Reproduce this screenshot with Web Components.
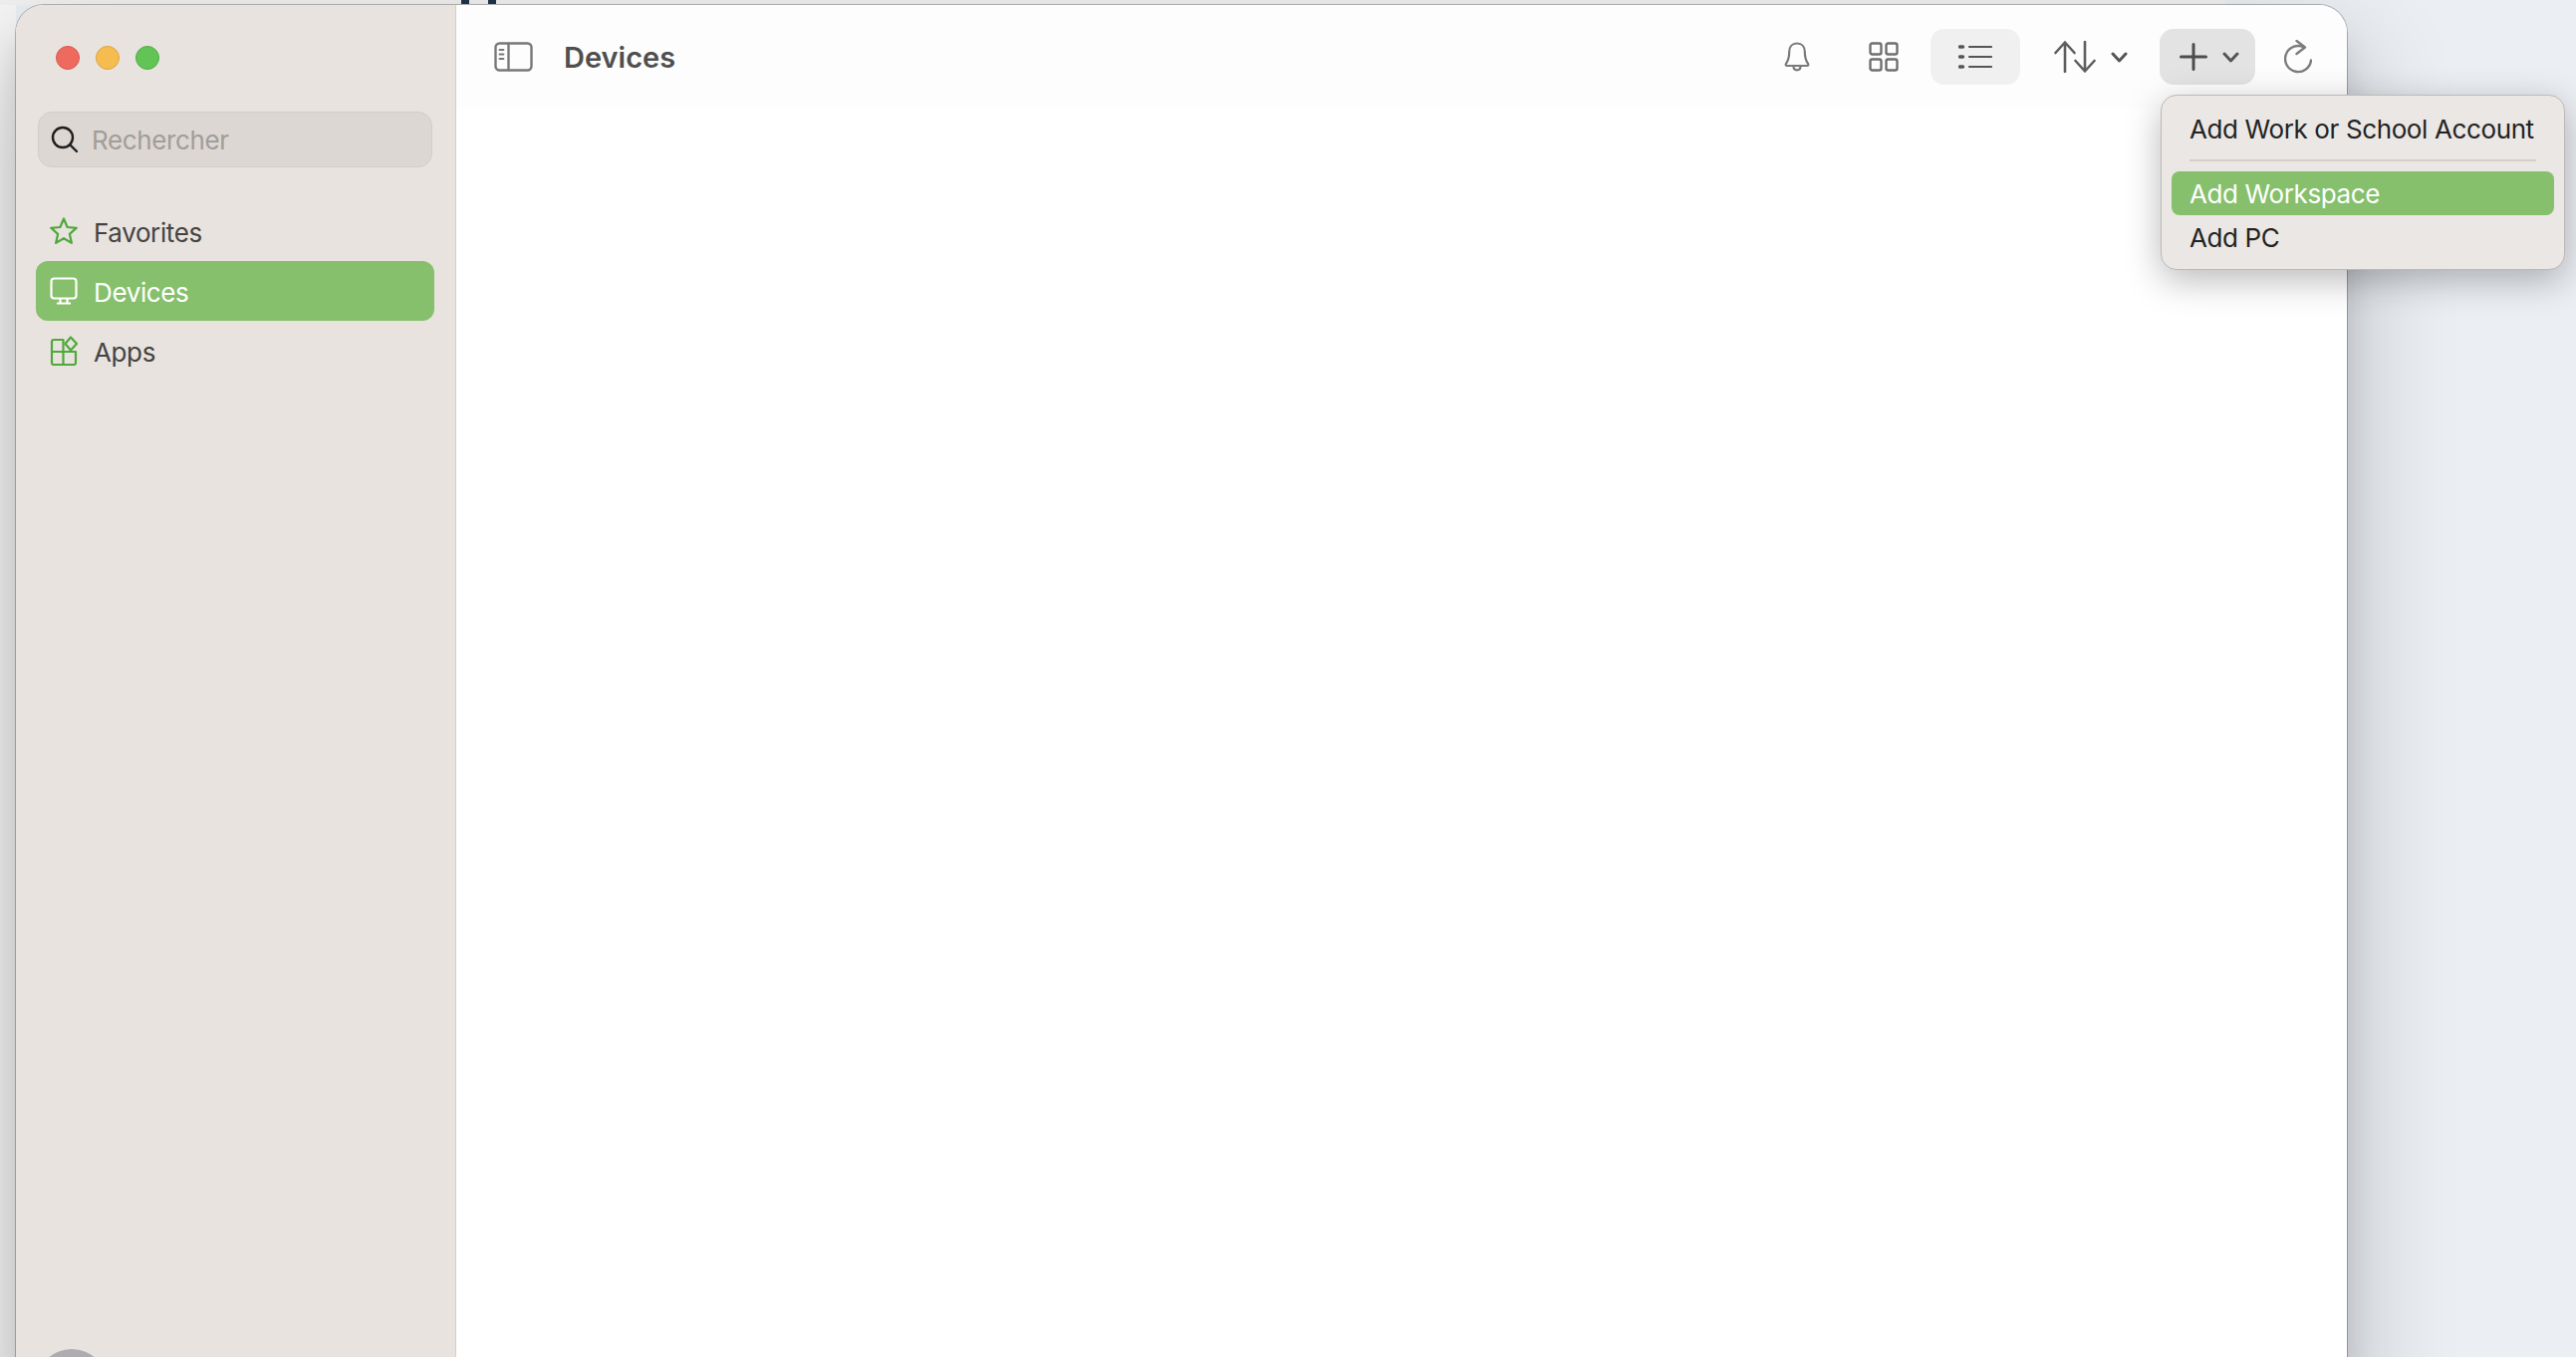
<!DOCTYPE html>
<html>
<head>
<meta charset="utf-8">
<title>Devices</title>
<style>
    html, body { margin: 0; height: 100%; overflow: hidden; }
    body { font-family: Inter, "Liberation Sans", sans-serif; letter-spacing: -0.38px; }
</style>
</head>
<body>
<app-desktop>
    <app-window>
        <side-bar slot="side">
            <nav-item icon="star">Favorites</nav-item>
            <nav-item icon="monitor" active>Devices</nav-item>
            <nav-item icon="apps">Apps</nav-item>
        </side-bar>
        <tool-bar slot="main" heading="Devices">
            <tool-button icon="bell" style="--w:88px"></tool-button>
            <tool-button icon="grid" style="--w:86px;margin-right:4px"></tool-button>
            <tool-button icon="list" tone="soft" style="--w:90px"></tool-button>
            <tool-button icon="sort" chevron style="--w:135px;margin-left:3px;margin-right:2px"></tool-button>
            <tool-button icon="plus" chevron tone="strong" style="--w:96px"></tool-button>
            <tool-button icon="refresh" style="--w:86px"></tool-button>
        </tool-bar>
    </app-window>
    <add-menu slot="overlay">
        <menu-item>Add Work or School Account</menu-item>
        <menu-line></menu-line>
        <menu-item active>Add Workspace</menu-item>
        <menu-item>Add PC</menu-item>
    </add-menu>
</app-desktop>

<script>
const ICONS = {
    star: `<svg width="28" height="28" viewBox="0 0 28 28" fill="none" stroke="currentColor" stroke-width="2.2" stroke-linejoin="round"><path d="M14 1.5 17.6 10 26.8 10.8 19.9 16.9 21.9 25.9 14 21.2 6.1 25.9 8.1 16.9 1.2 10.8 10.4 10Z"/></svg>`,
    monitor: `<svg width="28" height="28" viewBox="0 0 28 28" fill="none" stroke="currentColor" stroke-width="2.2" stroke-linejoin="round"><rect x="1.5" y="1.5" width="25" height="20" rx="3"/><path d="M10.5 22v3.5M17.5 22v3.5M7 26.5h14"/></svg>`,
    apps: `<svg width="28" height="30" viewBox="0 0 28 30" fill="none" stroke="currentColor" stroke-width="2.2" stroke-linejoin="round"><path d="M13.5 16V4H4a2 2 0 0 0-2 2v21a2 2 0 0 0 2 2h20a2 2 0 0 0 2-2V16H2M13.5 16v13"/><path d="M21 1.5 27 8 21 14.5 15.5 8Z"/></svg>`,
    search: `<svg width="28" height="28" viewBox="0 0 28 28" fill="none" stroke="currentColor" stroke-width="2.4" stroke-linecap="round"><circle cx="12" cy="12" r="10"/><path d="M19.5 19.5 26 26"/></svg>`,
    panel: `<svg width="39" height="30" viewBox="0 0 39 30" fill="none" stroke="#777" stroke-width="2.4" stroke-linecap="round"><rect x="1.5" y="1.5" width="36" height="27" rx="4"/><path d="M14.5 2v26"/><path d="M5.5 8h4M5.5 12.5h4M5.5 17h4" stroke-width="1.8"/></svg>`,
    bell: `<svg width="26" height="30" viewBox="0 0 26 30" fill="none" stroke="#7a7a7a" stroke-width="2.2" stroke-linejoin="round"><path d="M13 1.5c-5 0-7.800 3.600-7.800 8.500 0 5.500-.7 8.500-3.300 12-.6.900-.2 2 1 2h20.200c1.200 0 1.600-1.100 1-2-2.600-3.500-3.300-6.500-3.300-12 0-4.900-2.800-8.500-7.800-8.500Z"/><path d="M9.500 24.500c0 2.400 1.500 3.800 3.500 3.800s3.500-1.400 3.500-3.800"/></svg>`,
    grid: `<svg width="30" height="30" viewBox="0 0 30 30" fill="none" stroke="#6f6f6f" stroke-width="2.4"><rect x="1.500" y="1.500" width="11" height="11" rx="2"/><rect x="17.500" y="1.500" width="11" height="11" rx="2"/><rect x="1.500" y="17.500" width="11" height="11" rx="2"/><rect x="17.500" y="17.500" width="11" height="11" rx="2"/></svg>`,
    list: `<svg width="34" height="24" viewBox="0 0 34 24" fill="none" stroke="#555" stroke-linecap="round"><path d="M1.500 2h3M1.500 12h3M1.500 22h3" stroke-width="3.400"/><path d="M11 2h22M11 12h22M11 22h22" stroke-width="2.200"/></svg>`,
    sort: `<svg width="42" height="32" viewBox="0 0 42 32" fill="none" stroke="#5f5f5f" stroke-width="2.600" stroke-linecap="round" stroke-linejoin="round"><path d="M11 31V1.500M1.500 12 11 1.500 20.500 12"/><path d="M31 1V30.500M21.500 20 31 30.500 40.500 20"/></svg>`,
    plus: `<svg width="28" height="28" viewBox="0 0 28 28" fill="none" stroke="#4d4d4d" stroke-width="3" stroke-linecap="round"><path d="M14 1.500v25M1.500 14h25"/></svg>`,
    refresh: `<svg width="28" height="35" viewBox="0 0 28 35" fill="none" stroke="#7c7c7c" stroke-width="2.400" stroke-linecap="round" stroke-linejoin="round"><path d="M20 7.500A13 13 0 1 0 27 20.500"/><path d="M12.500 1 21 7.500 12.500 14"/></svg>`,
    chevron: `<svg width="17" height="11" viewBox="0 0 17 11" fill="none" stroke="#555" stroke-width="3" stroke-linecap="round" stroke-linejoin="round"><path d="M2 2l6.500 7L15 2"/></svg>`
};

class AppDesktop extends HTMLElement {
    connectedCallback() {
        this.attachShadow({ mode: 'open' });
        this.shadowRoot.innerHTML = `
            <style>
                :host {
                    display: block;
                    position: relative;
                    height: 1362px;
                    overflow: hidden;
                    background: linear-gradient(to right, #f6f6f6 0, #f6f6f6 16px, #ebeef3 16px);
                }
                .strip {
                    display: flex;
                    gap: 19px;
                    width: 2234px;
                    height: 5px;
                    padding-left: 463px;
                    box-sizing: border-box;
                    background: #f1f1f1;
                }
                .strip i { width: 8px; height: 4px; background: #1c3048; }
                .stage { padding-left: 16px; }
            </style>
            <div class="strip"><i></i><i></i></div>
            <div class="stage"><slot></slot></div>
            <slot name="overlay"></slot>
        `;
    }
}

class AppWindow extends HTMLElement {
    connectedCallback() {
        this.attachShadow({ mode: 'open' });
        this.shadowRoot.innerHTML = `
            <style>
                :host {
                    display: flex;
                    width: 2340px;
                    height: 1430px;
                    box-sizing: border-box;
                    border-radius: 28px;
                    background: #fff;
                    box-shadow: 0 0 0 1px rgba(0,0,0,.25), 0 30px 30px rgba(0,0,0,.1), 0 40px 110px rgba(0,0,0,.24);
                    overflow: hidden;
                }
                .side { flex: 0 0 442px; display: flex; }
                .main { flex: 1; min-width: 0; }
            </style>
            <div class="side"><slot name="side"></slot></div>
            <div class="main"><slot name="main"></slot></div>
        `;
    }
}

class SideBar extends HTMLElement {
    connectedCallback() {
        this.attachShadow({ mode: 'open' });
        this.shadowRoot.innerHTML = `
            <style>
                :host {
                    display: flex;
                    flex-direction: column;
                    flex: 1;
                    box-sizing: border-box;
                    padding: 41px 21px 9px 20px;
                    background: #e8e3df;
                    border-right: 1px solid #d3cec9;
                }
                .lights { display: flex; gap: 16px; margin: 0 0 42px 20px; }
                .lights i { width: 24px; height: 24px; border-radius: 50%; box-sizing: border-box; }
                .red { background: #ee6a5f; border: 1px solid #d9574d; }
                .amber { background: #f5bd4f; border: 1px solid #dea43a; }
                .green { background: #61c454; border: 1px solid #4fae43; }
                .search {
                    display: flex;
                    align-items: center;
                    gap: 13px;
                    height: 56px;
                    margin: 0 2px 34px;
                    padding-left: 12px;
                    box-sizing: border-box;
                    background: #dcd7d3;
                    border: 1px solid #d2cdc9;
                    border-radius: 14px;
                    font-size: 26px;
                    color: #a19d99;
                }
                .search span { display: flex; color: #1f1f1f; }
                .avatar {
                    width: 72px;
                    height: 72px;
                    margin: auto 0 0 0;
                    border-radius: 50%;
                    background: #aeacb0;
                }
            </style>
            <div class="lights"><i class="red"></i><i class="amber"></i><i class="green"></i></div>
            <div class="search"><span>${ICONS.search}</span>Rechercher</div>
            <slot></slot>
            <div class="avatar"></div>
        `;
    }
}

class NavItem extends HTMLElement {
    connectedCallback() {
        this.attachShadow({ mode: 'open' });
        this.shadowRoot.innerHTML = `
            <style>
                :host {
                    display: flex;
                    align-items: center;
                    gap: 16px;
                    height: 60px;
                    padding-left: 14px;
                    border-radius: 12px;
                    font-size: 26px;
                    color: #454342;
                }
                :host([active]) { background: #86c06c; color: #fff; }
                .icon { display: flex; color: #4fa83a; }
                :host([active]) .icon { color: #fff; }
                .label { padding-top: 2px; }
            </style>
            <span class="icon">${ICONS[this.getAttribute('icon')]}</span>
            <span class="label"><slot></slot></span>
        `;
    }
}

class ToolBar extends HTMLElement {
    connectedCallback() {
        this.attachShadow({ mode: 'open' });
        this.shadowRoot.innerHTML = `
            <style>
                :host {
                    display: flex;
                    align-items: center;
                    height: 104px;
                    box-sizing: border-box;
                    padding: 0 6px 0 38px;
                    background: #fdfdfd;
                    letter-spacing: 0;
                }
                .panel { display: flex; margin-right: 31px; }
                h1 {
                    flex: 1;
                    margin: 0;
                    font-size: 29px;
                    font-weight: 600;
                    color: #4f4f4f;
                }
            </style>
            <span class="panel">${ICONS.panel}</span>
            <h1>${this.getAttribute('heading')}</h1>
            <slot></slot>
        `;
    }
}

class ToolButton extends HTMLElement {
    connectedCallback() {
        this.attachShadow({ mode: 'open' });
        const chevron = this.hasAttribute('chevron') ? ICONS.chevron : '';
        this.shadowRoot.innerHTML = `
            <style>
                :host {
                    display: flex;
                    align-items: center;
                    justify-content: center;
                    gap: 15px;
                    width: var(--w);
                    height: 56px;
                    box-sizing: border-box;
                    border-radius: 14px;
                }
                :host([tone="soft"]) { background: #f0f0f0; }
                :host([tone="strong"]) { background: #e3e3e3; padding-left: 4px; }
                svg { display: block; }
            </style>
            ${ICONS[this.getAttribute('icon')]}${chevron}
        `;
    }
}

class AddMenu extends HTMLElement {
    connectedCallback() {
        this.attachShadow({ mode: 'open' });
        this.shadowRoot.innerHTML = `
            <style>
                :host {
                    position: absolute;
                    left: 2169px;
                    top: 95px;
                    width: 406px;
                    height: 176px;
                    box-sizing: border-box;
                    padding: 11px 10px;
                    background: #ebe7e4;
                    border: 1px solid #bdb9b6;
                    border-radius: 16px;
                    box-shadow: 0 10px 36px rgba(0,0,0,.28);
                    font-size: 26px;
                    color: #232323;
                }
            </style>
            <slot></slot>
        `;
    }
}

class MenuItem extends HTMLElement {
    connectedCallback() {
        this.attachShadow({ mode: 'open' });
        this.shadowRoot.innerHTML = `
            <style>
                :host {
                    display: flex;
                    align-items: center;
                    height: 44px;
                    padding-left: 18px;
                    border-radius: 8px;
                    white-space: nowrap;
                }
                :host([active]) { background: #86c06c; color: #fff; }
            </style>
            <slot></slot>
        `;
    }
}

class MenuLine extends HTMLElement {
    connectedCallback() {
        this.attachShadow({ mode: 'open' });
        this.shadowRoot.innerHTML = `
            <style>
                :host {
                    display: block;
                    height: 2px;
                    margin: 9px 18px 10px 18px;
                    background: #d3cecb;
                }
            </style>
        `;
    }
}

customElements.define('app-desktop', AppDesktop);
customElements.define('app-window', AppWindow);
customElements.define('side-bar', SideBar);
customElements.define('nav-item', NavItem);
customElements.define('tool-bar', ToolBar);
customElements.define('tool-button', ToolButton);
customElements.define('add-menu', AddMenu);
customElements.define('menu-item', MenuItem);
customElements.define('menu-line', MenuLine);
</script>
</body>
</html>
